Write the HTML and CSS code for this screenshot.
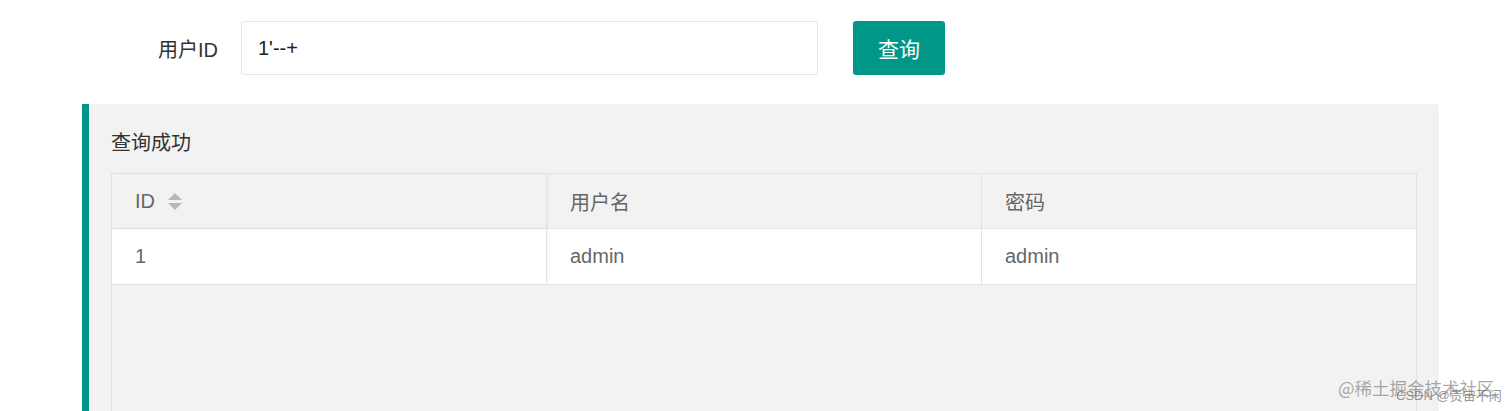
FILE: index.html
```html
<!DOCTYPE html>
<html lang="zh-CN">
<head>
<meta charset="utf-8">
<title>查询</title>
<link rel="stylesheet" href="styles.css">
</head>
<body>
<div class="page">
  <form class="form-row" onsubmit="return false">
    <label class="form-label" for="uid">用户ID</label>
    <input class="form-input" id="uid" type="text" value="1'--+">
    <button class="btn" type="submit">查询</button>
  </form>
  <div class="panel">
    <div class="panel-title">查询成功</div>
    <div class="table-box">
      <div class="t-row t-head">
        <div class="t-cell c1">ID
          <svg class="sort" width="14" height="18" viewBox="0 0 14 18"><polygon points="7,0 14,7 0,7" fill="#b8b8b8"/><polygon points="0,10 14,10 7,17" fill="#b8b8b8"/></svg>
        </div>
        <div class="t-cell c2">用户名</div>
        <div class="t-cell c3">密码</div>
      </div>
      <div class="t-row t-body">
        <div class="t-cell c1">1</div>
        <div class="t-cell c2">admin</div>
        <div class="t-cell c3">admin</div>
      </div>
    </div>
  </div>
  <div class="wm">
    <span class="wm-main">@稀土掘金技术社区</span>
    <span class="wm-sub">CSDN @贵宙不闲</span>
  </div>
</div>
</body>
</html>
```
FILE: styles.css
```css
* { box-sizing: border-box; }
html, body { margin: 0; padding: 0; background: #fff; overflow: hidden; }
body {
  font-family: "Liberation Sans", "Noto Sans CJK SC", sans-serif;
  color: #333;
  font-size: 20px;
}
.page { position: relative; width: 1512px; height: 411px; overflow: hidden; }
.form-row {
  display: flex;
  align-items: center;
  margin: 0;
  padding: 21px 0 0 82px;
}
.form-label {
  width: 159px;
  padding-right: 23px;
  text-align: right;
  font-size: 20px;
  color: #333;
}
.form-input {
  width: 577px;
  height: 54px;
  border: 1px solid #e6e6e6;
  border-radius: 3px;
  padding: 0 16px;
  font: inherit;
  font-size: 20px;
  color: #222;
  outline: none;
  background: #fff;
}
.btn {
  margin-left: 35px;
  width: 92px;
  height: 54px;
  border: none;
  border-radius: 3px;
  background: #009688;
  color: #fff;
  font: inherit;
  font-size: 21px;
  padding: 0;
}
.panel {
  margin: 29px 0 0 82px;
  width: 1357px;
  height: 307px;
  background: #f2f2f2;
  border-left: 7px solid #009688;
  border-radius: 0 3px 0 0;
  padding: 24px 22px 0 22px;
}
.panel-title {
  line-height: 30px;
  font-size: 20px;
  color: #333;
  margin-bottom: 15px;
}
.table-box {
  width: 1306px;
  height: 238px;
  border: 1px solid #e4e4e4;
  border-bottom: none;
  background: #f2f2f2;
}
.t-row { display: flex; height: 56px; }
.t-head { background: #f2f2f2; height: 55px; border-bottom: 1px solid #e4e4e4; }
.t-body { background: #fff; border-bottom: 1px solid #e4e4e4; }
.t-cell {
  display: flex;
  align-items: center;
  padding-left: 23px;
  color: #666;
  font-size: 20px;
}
.c1 { width: 435px; border-right: 1px solid #e2e2e2; box-shadow: 1px 0 3px rgba(0,0,0,0.05); position: relative; }
.c2 { width: 435px; border-right: 1px solid #e2e2e2; }
.c3 { flex: 1; }
.sort { margin-left: 13px; margin-top: 1px; }
.wm {
  position: absolute;
  left: 1336px;
  top: 374px;
  width: 176px;
  height: 37px;
}
.wm-main {
  position: absolute;
  left: 2px;
  top: 0;
  font-size: 17.5px;
  line-height: 28px;
  color: rgba(140,140,140,0.75);
  white-space: nowrap;
  font-family: "Noto Sans CJK SC", sans-serif;
}
.wm-sub {
  position: absolute;
  left: 60px;
  top: 14px;
  font-size: 13px;
  line-height: 16px;
  color: rgba(120,120,120,0.8);
  white-space: nowrap;
  font-family: "Liberation Sans", "Noto Sans CJK SC", sans-serif;
}
```
